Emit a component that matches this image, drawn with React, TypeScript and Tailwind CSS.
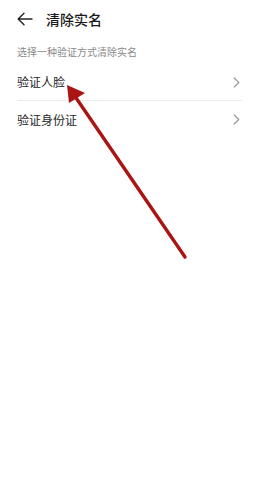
const font = { fontFamily: '"Noto Sans CJK SC", "Noto Sans", sans-serif' };

function Row({ label, last }: { label: string; last?: boolean }) {
  return (
    <div
      className={`flex h-[37px] items-center justify-between ${
        last ? "" : "border-b border-[#ececec]"
      }`}
    >
      <span className="text-[12px] text-[#262626]">{label}</span>
      <svg width="7" height="11" viewBox="0 0 7 11" fill="none" stroke="#9a9a9a" strokeWidth="1.2" strokeLinecap="round" strokeLinejoin="round" className="mr-[2px]">
        <path d="M1.2 1 5.8 5.5 1.2 10" />
      </svg>
    </div>
  );
}

export default function App() {
  return (
    <div className="relative h-[500px] w-[257px] overflow-hidden bg-white" style={font}>
      <div className="flex h-[38px] items-center gap-[13px] px-[17px]">
        <svg width="16" height="14" viewBox="0 0 16 14" fill="none" stroke="#222" strokeWidth="1.4" strokeLinecap="round" strokeLinejoin="round">
          <path d="M15 7H1.5M7 1.2 1.2 7 7 12.8" />
        </svg>
        <h1 className="text-[14px] font-medium text-[#1a1a1a]">清除实名</h1>
      </div>

      <p className="mt-[7px] px-[17px] text-[10px] leading-[14px] text-[#8a8a8a]">
        选择一种验证方式清除实名
      </p>

      <div className="mt-[5px] ml-[17px] mr-[15px]">
        <Row label="验证人脸" />
        <Row label="验证身份证" last />
      </div>

      <svg className="pointer-events-none absolute left-0 top-0" width="257" height="500" viewBox="0 0 257 500">
        <line x1="185" y1="257" x2="72" y2="92" stroke="#aa1412" strokeWidth="3.4" strokeLinecap="round" />
        <polygon points="67,85 69,103 85,93" fill="#aa1412" />
      </svg>
    </div>
  );
}
